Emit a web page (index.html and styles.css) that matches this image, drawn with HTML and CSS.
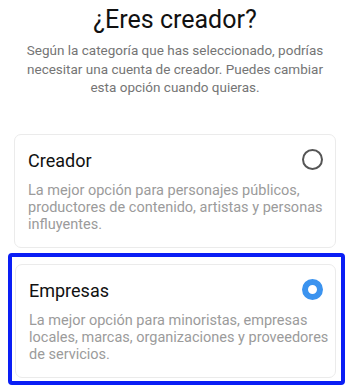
FILE: index.html
```html
<!DOCTYPE html>
<html lang="es">
<head>
<meta charset="utf-8">
<title>¿Eres creador?</title>
<link rel="stylesheet" href="styles.css">
</head>
<body>
<main class="page">
  <header class="intro">
    <h1 class="title">¿Eres creador?</h1>
    <p class="subtitle">Según la categoría que has seleccionado, podrías<br>necesitar una cuenta de creador. Puedes cambiar<br>esta opción cuando quieras.</p>
  </header>
  <div class="options">
    <div class="option-wrap">
      <div class="card">
        <div class="card-head">
          <span class="card-title">Creador</span>
          <span class="radio"></span>
        </div>
        <p class="card-desc">La mejor opción para personajes públicos,<br>productores de contenido, artistas y personas<br>influyentes.</p>
      </div>
    </div>
    <div class="option-wrap focused">
      <div class="card">
        <div class="card-head">
          <span class="card-title">Empresas</span>
          <span class="radio checked"></span>
        </div>
        <p class="card-desc">La mejor opción para minoristas, empresas<br>locales, marcas, organizaciones y proveedores<br>de servicios.</p>
      </div>
    </div>
  </div>
</main>
</body>
</html>
```

FILE: styles.css
```css
* { box-sizing: border-box; }
html, body { margin: 0; padding: 0; background: #ffffff; }
body {
  font-family: Roboto, "Noto Sans", "DejaVu Sans", sans-serif;
  color: #111111;
}
.page {
  width: 350px;
  display: flex;
  flex-direction: column;
}
.intro {
  display: flex;
  flex-direction: column;
  align-items: center;
  padding-top: 5px;
}
.title {
  margin: 0;
  font-size: 25px;
  line-height: 30px;
  font-weight: 400;
  color: #111111;
  white-space: nowrap;
}
.subtitle {
  margin: 6px 0 0;
  font-size: 13.5px;
  line-height: 18.5px;
  color: #757575;
  text-align: center;
  white-space: nowrap;
}
.options {
  display: flex;
  flex-direction: column;
  margin-top: 37px;
  gap: 5px;
}
.option-wrap {
  padding: 0 14px 0 14px;
}
.option-wrap.focused {
  margin: 0 5px 0 8px;
  padding: 7px 5px 3px 3px;
  border: 4px solid #0a1ef5;
  border-radius: 4px;
}
.card {
  border: 1px solid #ebebeb;
  border-radius: 7px;
  padding: 15px 12px 14px 13px;
  background: #ffffff;
}
.card-head {
  display: flex;
  align-items: center;
  justify-content: space-between;
  height: 22px;
}
.card-title {
  font-size: 18px;
  line-height: 22px;
  color: #111111;
}
.radio {
  width: 21px;
  height: 21px;
  margin-top: -2px;
  border-radius: 50%;
  border: 2px solid #555555;
  background: #ffffff;
}
.radio.checked {
  border: 6.5px solid #3b93ef;
  background: #ffffff;
}
.card-desc {
  margin: 10px 0 0;
  font-size: 14.5px;
  line-height: 17px;
  color: #9b9b9b;
  white-space: nowrap;
}
```
